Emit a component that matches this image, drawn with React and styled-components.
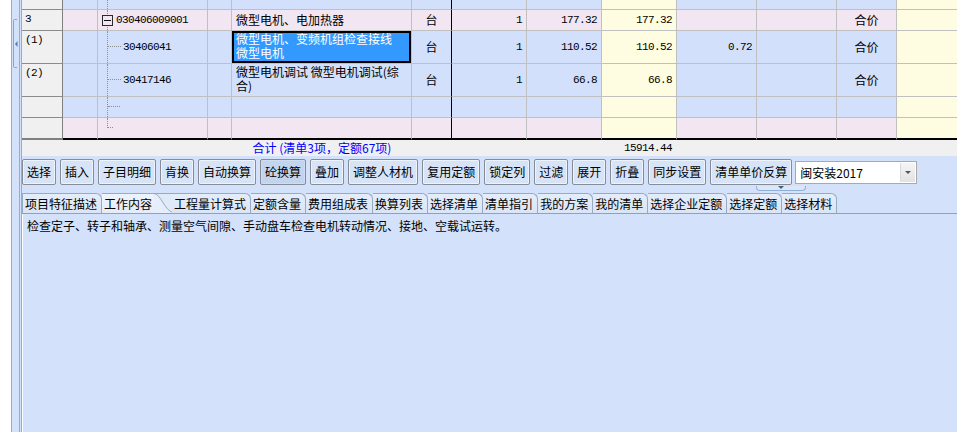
import React from 'react';
import styled, { createGlobalStyle, css } from 'styled-components';

const CJK = `"Noto Sans CJK SC", "Noto Sans", sans-serif`;
const MONO = `"Liberation Mono", "DejaVu Sans Mono", monospace`;

const TONES = { blue: '#d2e0fb', pink: '#f1e6f2', yellow: '#fffde1', head: '#f0f0f0' };
const COLS = '41px 35px 110px 24px 180px 40px 75px 75px 75px 80px 80px 60px 1fr';

const GlobalStyle = createGlobalStyle`
  html, body { margin: 0; padding: 0; background: #fff; }
  body { font-family: ${CJK}; font-size: 12px; color: #000; }
  #root { width: 957px; height: 432px; overflow: hidden; }
`;

const Shell = styled.div`
  display: flex;
  width: 957px;
  height: 432px;
  overflow: hidden;
  background: #fff;
`;

const Gutter = styled.div`
  width: 11px;
  flex: none;
  background: #fff;
`;

const Rail = styled.div`
  width: 7px;
  flex: none;
  background: #d3e2fa;
  border-left: 1px solid #9eabbf;
  border-right: 3px double #9eabbf;
  padding-top: 19px;
  display: flex;
  flex-direction: column;
  align-items: flex-start;
`;

const Main = styled.div`
  flex: 1;
  min-width: 0;
  display: flex;
  flex-direction: column;
  background: #d3e2fa;
`;

const Grid = styled.div`
  display: flex;
  flex-direction: column;
  flex: none;
`;

const Row = styled.div`
  display: grid;
  grid-template-columns: ${COLS};
  height: ${(p) => p.$h}px;
`;

const Cell = styled.div`
  box-sizing: border-box;
  position: relative;
  min-width: 0;
  overflow: hidden;
  display: flex;
  align-items: ${(p) => (p.$top ? 'flex-start' : 'center')};
  justify-content: ${(p) =>
    p.$align === 'right' ? 'flex-end' : p.$align === 'center' ? 'center' : 'flex-start'};
  padding: ${(p) => (p.$top ? '1px 4px 0 4px' : '0 4px')};
  background: ${(p) => (p.$selected ? '#3399ff' : TONES[p.$tone])};
  color: ${(p) => (p.$selected ? '#fff' : '#000')};
  border-right: ${(p) => (p.$noRule ? 'none' : `1px solid ${p.$rule === 'black' ? '#000' : '#c0c0c0'}`)};
  border-bottom: ${(p) => (p.$last ? '2px solid #000' : '1px solid #c0c0c0')};
  box-shadow: ${(p) => (p.$selected ? 'inset 0 0 0 2px #000' : 'none')};
  font-size: 12px;
  line-height: 14px;
  white-space: nowrap;
`;

const HeadCell = styled.div`
  box-sizing: border-box;
  background: ${TONES.head};
  border-right: 1px solid #808080;
  border-bottom: ${(p) => (p.$last ? '2px solid #808080' : '1px solid #8c8c8c')};
  padding: 3px 0 0 3px;
  font: 11px/12px ${MONO};
  letter-spacing: -0.6px;
  overflow: hidden;
`;

const Num = styled.span`
  font: 11px/12px ${MONO};
  letter-spacing: -0.6px;
`;

const TreeCell = styled(Cell)`
  padding-left: ${(p) => p.$indent}px;
`;

const Guide = styled.span`
  position: absolute;
  pointer-events: none;
  ${(p) =>
    p.$v &&
    css`
      left: 9px;
      top: 0;
      height: ${p.$len != null ? `${p.$len}px` : '100%'};
      border-left: 1px dotted #8f8f8f;
    `}
  ${(p) =>
    p.$hz &&
    css`
      left: 10px;
      top: ${p.$y}px;
      width: ${p.$w}px;
      border-top: 1px dotted #8f8f8f;
    `}
`;

const Expander = styled.span`
  position: relative;
  z-index: 1;
  box-sizing: border-box;
  width: 11px;
  height: 11px;
  flex: none;
  border: 1px solid #2a2a2a;
  background: ${(p) => TONES[p.$tone]};
  margin-right: 3px;
  display: flex;
  align-items: center;
  justify-content: center;
  &::after {
    content: '';
    width: 7px;
    height: 1px;
    background: #111;
  }
`;

const Lines = styled.span`
  display: flex;
  flex-direction: column;
  white-space: nowrap;
`;

const Line = styled.span`
  display: block;
  height: 14px;
  line-height: 14px;
`;

const SummaryRow = styled.div`
  display: grid;
  grid-template-columns: ${COLS};
  height: 16px;
  flex: none;
  background: #f0f0f0;
  align-items: center;
`;

const SummaryLabel = styled.span`
  grid-column: 5;
  justify-self: center;
  white-space: nowrap;
  color: #0000ff;
  font-size: 12px;
  line-height: 16px;
`;

const SummaryTotal = styled.span`
  grid-column: 9;
  justify-self: end;
  padding-right: 5px;
  font: 11px/16px ${MONO};
  letter-spacing: -0.6px;
`;

const Toolbar = styled.div`
  position: relative;
  height: 36px;
  flex: none;
  box-sizing: border-box;
  display: flex;
  align-items: flex-start;
  gap: 4px;
  padding-top: 3px;
`;

const ToolButton = styled.button`
  height: 26px;
  margin: 0;
  padding: 0 4px;
  border: 1px solid #868c96;
  border-radius: 2px;
  background: ${(p) => (p.$pressed ? '#c3d4ee' : '#d7e4f7')};
  box-shadow: inset 0 0 0 1px ${(p) => (p.$pressed ? 'rgba(255,255,255,0.2)' : 'rgba(255,255,255,0.55)')};
  font: 12px/24px ${CJK};
  color: #000;
  white-space: nowrap;
  cursor: default;
`;

const Select = styled.div`
  margin: 2px 0 0 -1px;
  width: 122px;
  height: 23px;
  box-sizing: border-box;
  border: 1px solid #a9a9a9;
  background: #fff;
  display: flex;
  align-items: center;
  padding-left: 4px;
  font-size: 12px;
`;

const SelectValue = styled.span`
  flex: 1;
`;

const DropButton = styled.span`
  width: 15px;
  height: 19px;
  margin-right: 1px;
  box-sizing: border-box;
  border-left: 1px solid #dadada;
  background: linear-gradient(#f5f5f5, #e2e2e2);
  display: flex;
  align-items: center;
  justify-content: center;
  &::after {
    content: '';
    border-left: 3.5px solid transparent;
    border-right: 3.5px solid transparent;
    border-top: 3px solid #555;
  }
`;

const SplitHandle = styled.span`
  position: absolute;
  left: 734px;
  top: 30px;
  width: 50px;
  height: 5px;
  box-sizing: border-box;
  border: 1px solid #8fb0d6;
  border-top: none;
  border-radius: 0 0 4px 4px;
  background: #dbe7f8;
  display: flex;
  justify-content: center;
  &::after {
    content: '';
    border-left: 3.5px solid transparent;
    border-right: 3.5px solid transparent;
    border-top: 3px solid #4b5d78;
  }
`;

const TabStrip = styled.div`
  display: flex;
  align-items: flex-end;
  height: 22px;
  flex: none;
  box-sizing: border-box;
  border-bottom: 1px solid #8da2bf;
`;

const Tab = styled.div`
  height: 20px;
  box-sizing: border-box;
  padding: 0 4px 0 2px;
  border-top: 1px solid #98a9c2;
  border-right: 1px solid #98a9c2;
  ${(p) => p.$first && css`border-left: 1px solid #98a9c2;`}
  border-top-right-radius: 6px;
  background: linear-gradient(#e4edfa, #d9e5f7);
  font: 12px/19px ${CJK};
  white-space: nowrap;
`;

const ActiveTab = styled.div`
  height: 20px;
  box-sizing: border-box;
  display: flex;
  align-items: stretch;
  border-top: 1px solid #98a9c2;
  background: linear-gradient(#eef4fc, #e3ecfa);
  font: 12px/19px ${CJK};
  white-space: nowrap;
  margin-right: -2px;
`;

const ActiveLabel = styled.span`
  padding-left: 2px;
  padding-right: 2px;
`;

const TabCurve = styled.svg`
  display: block;
  margin-top: -1px;
  flex: none;
`;

const Content = styled.div`
  flex: 1;
  border-left: 1px solid #fff;
  padding: 3px 4px;
  background: #d3e2fa;
  font-size: 12px;
  line-height: 18px;
  white-space: nowrap;
`;

const ROWS = [
  { h: 10, tone: 'blue', tree: 'pass' },
  {
    h: 21, tone: 'pink', head: '3', tree: 'root', code: '030406009001',
    name: ['微型电机、电加热器'], unit: '台', qty: '1', price: '177.32', total: '177.32', kind: '合价',
  },
  {
    h: 33, tone: 'blue', head: '(1)', tree: 'child', hy: 15, code: '30406041',
    name: ['微型电机、变频机组检查接线', '微型电机'], wrap: true, selected: true,
    unit: '台', qty: '1', price: '110.52', total: '110.52', c9: '0.72', kind: '合价',
  },
  {
    h: 33, tone: 'blue', head: '(2)', tree: 'child', hy: 15, code: '30417146',
    name: ['微型电机调试 微型电机调试(综', '合)'], wrap: true,
    unit: '台', qty: '1', price: '66.8', total: '66.8', kind: '合价',
  },
  { h: 21, tone: 'blue', tree: 'child', hy: 9, hw: 12 },
  { h: 22, tone: 'pink', tree: 'end', hy: 9, hw: 5, last: true },
];

const BUTTONS = [
  '选择', '插入', '子目明细', '肯换', '自动换算', '砼换算', '叠加', '调整人材机',
  '复用定额', '锁定列', '过滤', '展开', '折叠', '同步设置', '清单单价反算',
];

const TABS = [
  '项目特征描述', '工作内容', '工程量计算式', '定额含量', '费用组成表', '换算列表', '选择清单',
  '清单指引', '我的方案', '我的清单', '选择企业定额', '选择定额', '选择材料',
];

function RailHandle() {
  return (
    <svg width="7" height="52" viewBox="0 0 7 52">
      <path d="M5 0.5 H2.5 Q1.5 0.5 1.5 1.5 V47.5 Q1.5 48.5 2.5 48.5 H5" fill="none" stroke="#7fa7d8" />
      <path d="M3 25 L5.5 22 V28 Z" fill="#4f7cb8" />
    </svg>
  );
}

function CodeCell({ row }) {
  const { tree, tone, last } = row;
  const indent = tree === 'root' ? 4 : 25;
  return (
    <TreeCell $tone={tone} $last={last} $indent={indent}>
      {tree === 'end' ? <Guide $v $len={row.hy + 1} /> : <Guide $v />}
      {(tree === 'child' || tree === 'end') && <Guide $hz $y={row.hy} $w={row.hw || 13} />}
      {tree === 'root' && <Expander $tone={tone} />}
      {row.code && <Num>{row.code}</Num>}
    </TreeCell>
  );
}

function DataRow({ row }) {
  const t = row.tone;
  const l = row.last;
  return (
    <Row $h={row.h}>
      <HeadCell $last={l}>{row.head}</HeadCell>
      <Cell $tone={t} $last={l} />
      <CodeCell row={row} />
      <Cell $tone={t} $last={l} />
      <Cell $tone={t} $last={l} $top={row.wrap} $selected={row.selected}>
        {row.name && (
          <Lines>
            {row.name.map((line, i) => (
              <Line key={i}>{line}</Line>
            ))}
          </Lines>
        )}
      </Cell>
      <Cell $tone={t} $last={l} $align="center" $rule="black">{row.unit}</Cell>
      <Cell $tone={t} $last={l} $align="right"><Num>{row.qty}</Num></Cell>
      <Cell $tone={t} $last={l} $align="right"><Num>{row.price}</Num></Cell>
      <Cell $tone="yellow" $last={l} $align="right"><Num>{row.total}</Num></Cell>
      <Cell $tone={t} $last={l} $align="right"><Num>{row.c9}</Num></Cell>
      <Cell $tone={t} $last={l} />
      <Cell $tone={t} $last={l} $align="center">{row.kind}</Cell>
      <Cell $tone="yellow" $last={l} $noRule />
    </Row>
  );
}

export default function App() {
  return (
    <>
      <GlobalStyle />
      <Shell>
        <Gutter />
        <Rail>
          <RailHandle />
        </Rail>
        <Main>
          <Grid>
            {ROWS.map((row, i) => (
              <DataRow key={i} row={row} />
            ))}
          </Grid>
          <SummaryRow>
            <SummaryLabel>合计 (清单3项，定额67项)</SummaryLabel>
            <SummaryTotal>15914.44</SummaryTotal>
          </SummaryRow>
          <Toolbar>
            {BUTTONS.map((b) => (
              <ToolButton key={b} $pressed={b === '砼换算'}>{b}</ToolButton>
            ))}
            <Select>
              <SelectValue>闽安装2017</SelectValue>
              <DropButton />
            </Select>
            <SplitHandle />
          </Toolbar>
          <TabStrip>
            {TABS.map((t, i) =>
              i === 1 ? (
                <ActiveTab key={t}>
                  <ActiveLabel>{t}</ActiveLabel>
                  <TabCurve width="20" height="20" viewBox="0 0 20 20">
                    <rect x="0" y="0" width="20" height="20" fill="#dfe9f8" />
                    <path d="M0 0.5 C7 0.5 11 19.5 20 19.5 L20 20 L0 20 Z" fill="#e6eefb" />
                    <path d="M0 0.5 H20" stroke="#98a9c2" fill="none" />
                    <path d="M0 0.5 C7 0.5 11 19.5 20 19.5" stroke="#98a9c2" fill="none" />
                  </TabCurve>
                </ActiveTab>
              ) : (
                <Tab key={t} $first={i === 0}>{t}</Tab>
              )
            )}
          </TabStrip>
          <Content>检查定子、转子和轴承、测量空气间隙、手动盘车检查电机转动情况、接地、空载试运转。</Content>
        </Main>
      </Shell>
    </>
  );
}
